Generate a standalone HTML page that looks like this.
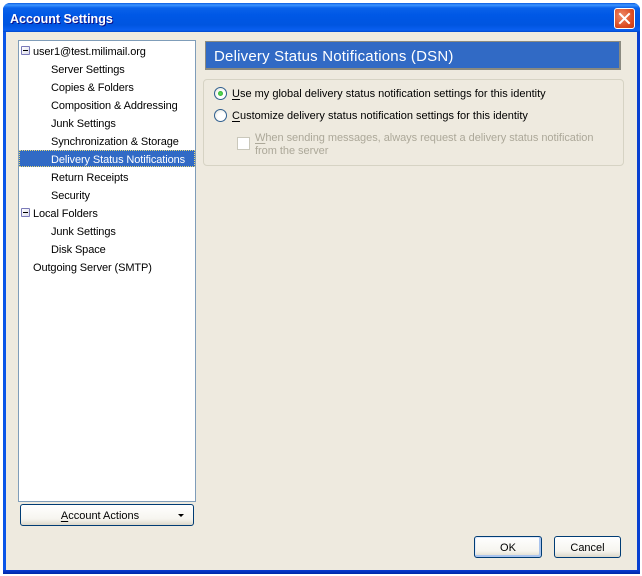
<!DOCTYPE html>
<html><head><meta charset="utf-8"><style>
html,body{margin:0;padding:0;background:#fff;width:642px;height:576px;overflow:hidden}
*{box-sizing:border-box}
body{font:11px "Liberation Sans",sans-serif;color:#000;position:relative}
.a{position:absolute;white-space:nowrap}
#win{left:3px;top:3px;width:637px;height:571px;background:linear-gradient(90deg,#0a55e8,#0a50e0 50%,#0840d0);border-radius:7px 7px 0 0}
#winb{left:3px;top:570px;width:637px;height:4px;background:linear-gradient(#0a3cd0,#0028a8)}
#tb{left:3px;top:3px;width:637px;height:29px;border-radius:7px 7px 0 0;background:linear-gradient(#0a5ae0 0,#3d95ff 2px,#0a62ea 5px,#0058e6 12px,#0055e0 22px,#0a5ff0 27px,#0048cc 29px)}
#client{left:6px;top:32px;width:631px;height:538px;background:#eeeadf}
#title{left:10px;top:12px;color:#fff;font:bold 12.5px "Liberation Sans",sans-serif;text-shadow:1px 1px 0 #0f1089}
#close{left:614px;top:8px;width:21px;height:21px;border:1px solid #fff;border-radius:3px;background:radial-gradient(circle at 35% 35%,#ee8a68,#dc4a20 65%,#c43a12)}
#tree{left:18px;top:40px;width:178px;height:462px;background:#fff;border:1px solid #7f9db9}
.r{left:51px;height:18px;line-height:18px;letter-spacing:-.1px}
.l{left:33px}
.sel{left:19px;top:150px;width:176px;height:17px;background:#316ac5;outline:1px dotted #e8d878;outline-offset:-1px}
.tw{left:21px;width:9px;height:9px;border:1px solid #7a7ab8;background:linear-gradient(135deg,#fff,#dcdcea);border-radius:1px}
.tw:after{content:"";position:absolute;left:1px;top:3px;width:5px;height:1px;background:#000}
#hd{left:205px;top:41px;width:416px;height:29px;background:#316ac5;border:1px solid #8a8a80;border-bottom-width:2px;border-right-width:2px;color:#fff;font-size:15px;line-height:29px;padding-left:8px;letter-spacing:.2px}
#gb{left:203px;top:79px;width:421px;height:87px;border:1px solid #d6d3c4;border-radius:4px}
.t{font-size:11px;height:14px;line-height:14px}
.rad{width:13px;height:13px;border-radius:50%;border:1px solid #2f5f8f;background:radial-gradient(circle at 60% 60%,#fff 40%,#dcdcd0)}
.dot{left:218px;top:91px;width:5px;height:5px;border-radius:50%;background:radial-gradient(#5fe05f,#21a121)}
.dis{color:#aca899;letter-spacing:-.04px}
#cb{left:237px;top:137px;width:13px;height:13px;background:#fff;border:1px solid #cac8bb}
.btn{border:1px solid #003c74;border-radius:3px;background:linear-gradient(#fff,#f6f5ef 70%,#dcd8ca);text-align:center;height:22px;line-height:22px}
u{text-decoration-thickness:1px;text-underline-offset:2px}
</style></head><body>
<div class="a" id="win"></div>
<div class="a" id="winb"></div>
<div class="a" id="tb"></div>
<div class="a" id="client"></div>
<div class="a" id="title">Account Settings</div>
<div class="a" id="close"><svg width="19" height="19" style="display:block"><path d="M5 5L14 14M14 5L5 14" stroke="#fff" stroke-width="2" stroke-linecap="square"/></svg></div>

<div class="a" id="tree"></div>
<div class="a sel"></div>
<div class="a tw" style="top:46px"></div>
<div class="a r l" style="top:43px">user1@test.milimail.org</div>
<div class="a r" style="top:61px">Server Settings</div>
<div class="a r" style="top:79px">Copies &amp; Folders</div>
<div class="a r" style="top:97px">Composition &amp; Addressing</div>
<div class="a r" style="top:115px">Junk Settings</div>
<div class="a r" style="top:133px">Synchronization &amp; Storage</div>
<div class="a r" style="top:151px;color:#fff">Delivery Status Notifications</div>
<div class="a r" style="top:169px">Return Receipts</div>
<div class="a r" style="top:187px">Security</div>
<div class="a tw" style="top:208px"></div>
<div class="a r l" style="top:205px">Local Folders</div>
<div class="a r" style="top:223px">Junk Settings</div>
<div class="a r" style="top:241px">Disk Space</div>
<div class="a r l" style="top:259px">Outgoing Server (SMTP)</div>

<div class="a btn" style="left:20px;top:504px;width:174px;padding-right:14px"><u>A</u>ccount Actions</div>
<div class="a" style="left:178px;top:514px;width:0;height:0;border:3px solid transparent;border-top:3px solid #000;border-bottom:0"></div>

<div class="a" id="hd">Delivery Status Notifications (DSN)</div>
<div class="a" id="gb"></div>
<div class="a rad" style="left:214px;top:87px"></div>
<div class="a dot"></div>
<div class="a t" style="left:232px;top:87px"><u>U</u>se my global delivery status notification settings for this identity</div>
<div class="a rad" style="left:214px;top:109px"></div>
<div class="a t" style="left:232px;top:109px"><u>C</u>ustomize delivery status notification settings for this identity</div>
<div class="a" id="cb"></div>
<div class="a t dis" style="left:255px;top:131px"><u>W</u>hen sending messages, always request a delivery status notification</div>
<div class="a t dis" style="left:255px;top:144px">from the server</div>

<div class="a btn" style="left:474px;top:536px;width:68px;box-shadow:inset -1px -1px 0 1px #a9c4ee,inset 1px 1px 0 #dfeafc">OK</div>
<div class="a btn" style="left:554px;top:536px;width:67px">Cancel</div>
</body></html>
